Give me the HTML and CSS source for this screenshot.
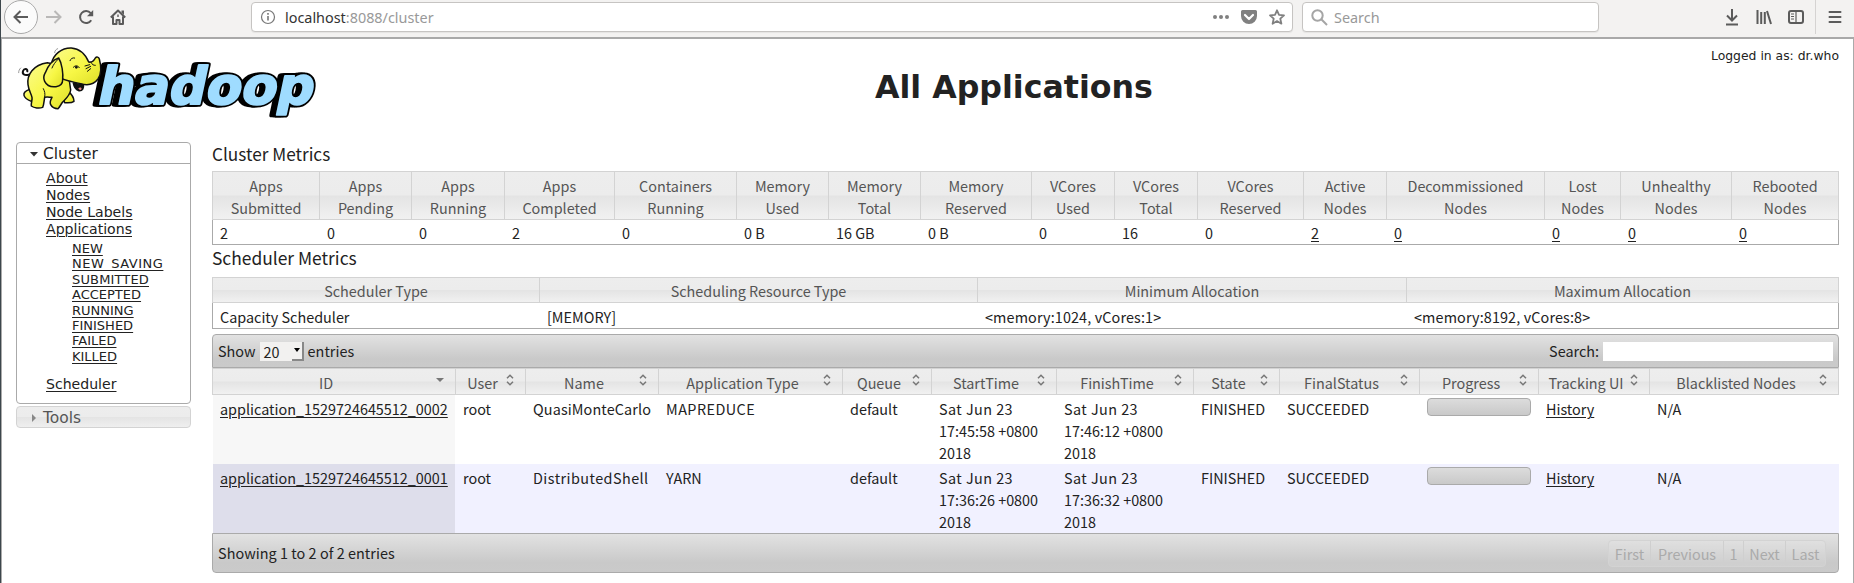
FILE: index.html
```html
<!DOCTYPE html>
<html lang="en">
<head>
<meta charset="utf-8">
<title>All Applications</title>
<link rel="stylesheet" href="styles.css">
</head>
<body>
<svg width="0" height="0" class="defs">
  <symbol id="sort" viewBox="0 0 8 12"><path d="M1 4.200 4 1.200 7 4.200M1 7.800 4 10.800 7 7.800" fill="none" stroke="#777" stroke-width="1.500"/></symbol>
</svg>
<header class="toolbar">
  <div class="nav">
    <span class="back"><svg width="16" height="16" viewBox="0 0 16 16"><path d="M15 8H2M7.500 2 1.500 8l6 6" class="ln"/></svg></span>
    <svg class="fwd" width="16" height="16" viewBox="0 0 16 16"><path d="M0 8h14M8.500 2l6 6-6 6" class="ln pale"/></svg>
    <svg class="reload" width="16" height="16" viewBox="0 0 16 16"><path d="M13.200 11.200A6 6 0 1 1 12.700 4.200" class="ln"/><path d="M15.200 1v6.200H9z" fill="#5b5b5b"/></svg>
    <svg class="home" width="16" height="16" viewBox="0 0 16 16"><path d="M.8 8.500 8 1.500l7.200 7M3 7.500V15h3.500v-4h3v4H13V7.500" class="ln" stroke-linejoin="round"/><path d="M11.500 1.500H14V6l-2.500-2.500zM7.300 5.500h1.400V8H7.300z" fill="#5b5b5b"/></svg>
  </div>
  <div class="url">
    <svg width="16" height="16" viewBox="0 0 16 16"><circle cx="8" cy="8" r="6.500" fill="none" stroke="#777" stroke-width="1.200"/><path d="M8 7v4.500M8 4v1.700" stroke="#777" stroke-width="1.600"/></svg>
    <span class="address">localhost<span>:8088/cluster</span></span>
    <svg width="16" height="16" viewBox="0 0 16 16" fill="#808080"><circle cx="2" cy="8" r="2"/><circle cx="8" cy="8" r="2"/><circle cx="14" cy="8" r="2"/></svg>
    <svg width="16" height="16" viewBox="0 0 16 16"><path d="M1.500 1h13a1.500 1.500 0 0 1 1.500 1.500V7a8 8 0 0 1-16 0V2.500A1.500 1.500 0 0 1 1.500 1z" fill="#808080"/><path d="M4 6l4 4 4-4" fill="none" stroke="#fff" stroke-width="2.200" stroke-linecap="round" stroke-linejoin="round"/></svg>
    <svg width="16" height="16" viewBox="0 0 16 16"><path d="M8 1.300 10 5.800l5 .5-3.700 3.400 1.100 5L8 12.100l-4.400 2.600 1.100-5L1 6.300l5-.5z" fill="none" stroke="#808080" stroke-width="1.800" stroke-linejoin="round"/></svg>
  </div>
  <div class="find">
    <svg width="17" height="17" viewBox="0 0 17 17"><circle cx="6.500" cy="6.500" r="5.200" class="mag"/><path d="M10.300 10.300 16 16" class="mag"/></svg>
    <span>Search</span>
  </div>
  <div class="tools">
    <svg width="16" height="18" viewBox="0 0 16 18"><path d="M8 1v11M3 7.500l5 5 5-5M2 16.500h12" class="ln"/></svg>
    <svg width="16" height="18" viewBox="0 0 16 18"><path d="M1.500 2v14M5.200 4v12M8.800 4v12M11 3l4 13" class="ln"/></svg>
    <svg width="16" height="18" viewBox="0 0 16 18"><rect x="1" y="3" width="14" height="12" rx="2" class="ln"/><path d="M8 3v12M3 6h3M3 8.500h3M3 11h3" stroke="#5b5b5b" stroke-width="1.200"/></svg>
    <i class="sep"></i>
    <svg width="14" height="18" viewBox="0 0 14 18"><path d="M1.500 4h11M1.500 9h11M1.500 14h11" class="ln" stroke-linecap="round"/></svg>
  </div>
</header>
<div class="page">
  <div class="banner">
    <svg class="logo" width="320" height="85" viewBox="0 0 960 255">
      <defs>
        <linearGradient id="skin" x1="0" y1="0" x2="1" y2="1"><stop offset="0" stop-color="#fbfb8c"/><stop offset=".55" stop-color="#f7f745"/><stop offset="1" stop-color="#dede28"/></linearGradient>
        <text id="word" class="word" x="0" y="0" textLength="648" lengthAdjust="spacingAndGlyphs">hadoop</text>
      </defs>
      <g transform="translate(257 191) skewX(-12)" stroke-linejoin="round">
        <use href="#word" x="-14" fill="#000" stroke="#000" stroke-width="16"/>
        <use href="#word" x="-7" fill="#000" stroke="#000" stroke-width="16"/>
        <use href="#word" fill="#000" stroke="#000" stroke-width="17"/>
        <use href="#word" fill="#9fdcff" stroke="#9fdcff" stroke-width="6"/>
      </g>
      <g stroke="#111" stroke-width="4.500" stroke-linejoin="round" stroke-linecap="round" fill="url(#skin)">
        <path d="M56 104c-12 4-20-2-17-11 3-8 14-8 13 1" fill="none" stroke-width="6"/>
        <path d="M60 148C48 152 40 158 42 166c2 8 12 14 22 18l10-16z"/>
        <path d="M172 152c10 8 20 20 20 32-8 6-18 4-28 4l-8-22z"/>
        <path d="M112 68C70 74 50 104 54 134c2 18 10 28 12 38 2 10-4 18-2 26 8 6 24 8 34 4 4-8 4-20 6-30 8-2 14 0 22 0-4 8-8 14-4 22 4 8 14 12 22 12 6-6 8-12 14-20 12-12 22-20 24-36l-10-70z"/>
        <path d="M124 72c6-30 32-49 60-48 24 2 42 18 52 42 10 2 16-4 20-12 4-5 10-3 12 3 5 18 8 42-4 60-12 16-32 20-52 14-24-6-50-8-68-22z"/>
        <path d="M190 129c2 11 6 19 16 23 12 2 16-8 14-18-10 0-18-2-30-5z" fill="#111"/>
        <path d="M205 145c4-4 9-3 10 1-2 5-7 5-10-1z" fill="#e88" stroke="none"/>
        <path d="M146 54C126 60 114 78 106 98c-6 10-6 18-2 26 6 12 18 18 34 16 14-2 20-8 20-20 2-20-2-50-12-66z"/>
        <path d="M144 58c-8 8-14 16-18 26M180 62c2-6 8-10 14-8M190 82c6-7 13-6 18 1M225 78l14-4M228 86l14-7M232 94l10-8M244 68c2 6 6 8 12 8M104 172c2-12 0-18-4-26" fill="none" stroke-width="3"/>
        <circle cx="199" cy="82" r="4" fill="#111" stroke="none"/>
        <path d="M134 38c0-6 4-10 9-12M26 98c0-6 2-10 6-14" fill="none" stroke="#666" stroke-width="2"/>
      </g>
    </svg>
    <h1>All Applications</h1>
    <div class="login">Logged in as: dr.who</div>
  </div>
  <div class="body">
    <nav class="side">
      <div class="panel">
        <h3><svg width="8" height="5" viewBox="0 0 8 5"><path d="M0 0h8L4 4.500z" fill="#333"/></svg>Cluster</h3>
        <ul>
          <li><a>About</a></li><li><a>Nodes</a></li><li><a>Node Labels</a></li>
          <li><a>Applications</a>
            <ul><li><a>NEW</a></li><li><a class="saving">NEW_SAVING</a></li><li><a class="submitted">SUBMITTED</a></li><li><a>ACCEPTED</a></li><li><a>RUNNING</a></li><li><a>FINISHED</a></li><li><a>FAILED</a></li><li><a>KILLED</a></li></ul>
          </li>
          <li><a>Scheduler</a></li>
        </ul>
      </div>
      <h3 class="closed"><svg width="8" height="8" viewBox="0 0 8 8"><path d="M2 0v8l4-4z" fill="#888"/></svg>Tools</h3>
    </nav>
    <main>
      <h2 class="first">Cluster Metrics</h2>
      <table class="info">
        <colgroup><col style="width:107px"><col style="width:92px"><col style="width:93px"><col style="width:110px"><col style="width:122px"><col style="width:92px"><col style="width:92px"><col style="width:111px"><col style="width:83px"><col style="width:83px"><col style="width:106px"><col style="width:83px"><col style="width:158px"><col style="width:76px"><col style="width:111px"><col style="width:108px"></colgroup>
        <thead><tr><th>Apps<br>Submitted</th><th>Apps<br>Pending</th><th>Apps<br>Running</th><th>Apps<br>Completed</th><th>Containers<br>Running</th><th>Memory<br>Used</th><th>Memory<br>Total</th><th>Memory<br>Reserved</th><th>VCores<br>Used</th><th>VCores<br>Total</th><th>VCores<br>Reserved</th><th>Active<br>Nodes</th><th>Decommissioned<br>Nodes</th><th>Lost<br>Nodes</th><th>Unhealthy<br>Nodes</th><th>Rebooted<br>Nodes</th></tr></thead>
        <tbody><tr><td>2</td><td>0</td><td>0</td><td>2</td><td>0</td><td>0 B</td><td>16 GB</td><td>0 B</td><td>0</td><td>16</td><td>0</td><td><a>2</a></td><td><a>0</a></td><td><a>0</a></td><td><a>0</a></td><td><a>0</a></td></tr></tbody>
      </table>
      <h2 class="second">Scheduler Metrics</h2>
      <table class="info sched">
        <colgroup><col style="width:327px"><col style="width:438px"><col style="width:429px"><col style="width:433px"></colgroup>
        <thead><tr><th>Scheduler Type</th><th>Scheduling Resource Type</th><th>Minimum Allocation</th><th>Maximum Allocation</th></tr></thead>
        <tbody><tr><td>Capacity Scheduler</td><td>[MEMORY]</td><td><span class="loose">&lt;memory:1024, vCores:1&gt;</span></td><td><span class="loose">&lt;memory:8192, vCores:8&gt;</span></td></tr></tbody>
      </table>
      <div class="bar top">
        <span>Show</span>
        <span class="select"><span>20</span><i><svg width="6" height="4" viewBox="0 0 6 4"><path d="M0 0h6L3 4z"/></svg></i></span>
        <span class="grow">entries</span>
        <span>Search:</span><input class="filter" type="text" aria-label="Search">
      </div>
      <table class="apps">
        <colgroup><col style="width:243px"><col style="width:70px"><col style="width:133px"><col style="width:184px"><col style="width:89px"><col style="width:125px"><col style="width:137px"><col style="width:86px"><col style="width:140px"><col style="width:119px"><col style="width:111px"><col style="width:190px"></colgroup>
        <thead><tr>
          <th><div>ID<svg width="8" height="12" viewBox="0 0 8 12"><path d="M0 4h8L4 8z" fill="#777"/></svg></div></th>
          <th><div>User<svg width="8" height="12"><use href="#sort"/></svg></div></th>
          <th><div>Name<svg width="8" height="12"><use href="#sort"/></svg></div></th>
          <th><div>Application Type<svg width="8" height="12"><use href="#sort"/></svg></div></th>
          <th><div>Queue<svg width="8" height="12"><use href="#sort"/></svg></div></th>
          <th><div>StartTime<svg width="8" height="12"><use href="#sort"/></svg></div></th>
          <th><div>FinishTime<svg width="8" height="12"><use href="#sort"/></svg></div></th>
          <th><div>State<svg width="8" height="12"><use href="#sort"/></svg></div></th>
          <th><div>FinalStatus<svg width="8" height="12"><use href="#sort"/></svg></div></th>
          <th><div>Progress<svg width="8" height="12"><use href="#sort"/></svg></div></th>
          <th><div>Tracking UI<svg width="8" height="12"><use href="#sort"/></svg></div></th>
          <th><div>Blacklisted Nodes<svg width="8" height="12"><use href="#sort"/></svg></div></th>
        </tr></thead>
        <tbody>
          <tr><td><a>application_1529724645512_0002</a></td><td>root</td><td><span class="loose">QuasiMonteCarlo</span></td><td><span class="wide">MAPREDUCE</span></td><td>default</td><td><span class="wide">Sat Jun 23</span><br>17:45:58 +0800<br>2018</td><td><span class="wide">Sat Jun 23</span><br>17:46:12 +0800<br>2018</td><td>FINISHED</td><td>SUCCEEDED</td><td><div class="progress"></div></td><td><a>History</a></td><td>N/A</td></tr>
          <tr class="even"><td><a>application_1529724645512_0001</a></td><td>root</td><td><span class="wide">DistributedShell</span></td><td>YARN</td><td>default</td><td><span class="wide">Sat Jun 23</span><br>17:36:26 +0800<br>2018</td><td><span class="wide">Sat Jun 23</span><br>17:36:32 +0800<br>2018</td><td>FINISHED</td><td>SUCCEEDED</td><td><div class="progress"></div></td><td><a>History</a></td><td>N/A</td></tr>
        </tbody>
      </table>
      <div class="bar bottom">
        <span class="grow">Showing 1 to 2 of 2 entries</span>
        <div class="pager"><span class="p1">First</span><span class="p2">Previous</span><span class="p3">1</span><span class="p4">Next</span><span class="p5">Last</span></div>
      </div>
    </main>
  </div>
</div>
</body>
</html>
```

FILE: styles.css
```css
* { box-sizing: border-box; }
body { margin: 0; width: 1854px; height: 583px; overflow: hidden; background: #fff; color: #222; border-left: 1px solid #3d474c; font: 14.4px/22px "Noto Sans CJK SC", sans-serif; }
.defs { display: block; }
h1, h2, h3, ul { margin: 0; padding: 0; font-weight: normal; list-style: none; }
svg { flex: none; }
a { text-decoration: underline; text-underline-offset: 2px; text-decoration-thickness: 1px; }

.toolbar { display: flex; height: 37px; background: #f3f2f1; font: 14.4px/30px "Noto Sans", sans-serif; align-items: flex-start; }
.ln { fill: none; stroke: #5b5b5b; stroke-width: 2; }
.ln.pale { stroke: #b9b8b7; }
.mag { fill: none; stroke: #a5a5a5; stroke-width: 2; }
.nav { display: flex; align-items: center; height: 34px; width: 250px; padding-left: 3px; }
.back { display: flex; align-items: center; justify-content: center; width: 34px; height: 34px; border: 1px solid #aaa; border-radius: 50%; background: #fbfbfb; }
.fwd { margin-left: 8px; }
.reload { margin-left: 16px; }
.home { margin-left: 16px; }
.url, .find { display: flex; align-items: center; height: 30px; margin-top: 2px; background: #fff; border: 1px solid #c6c4c2; border-radius: 4px; box-shadow: 0 1px 1px rgba(0, 0, 0, .06); }
.url { width: 1042px; padding: 0 7px 0 8px; gap: 12px; }
.address { flex: 1; color: #333; margin-left: -3px; padding-top: 1px; }
.address span { color: #999; }
.find { width: 297px; margin-left: 9px; padding-left: 8px; gap: 6px; color: #999; }
.find span { padding-top: 1px; }
.tools { display: flex; align-items: center; height: 34px; margin-left: 125px; gap: 16px; }
.sep { flex: none; width: 1px; height: 34px; background: #d5d3d2; margin: 0 -4px 0 -5px; }

.page { height: 546px; border: 1px solid #aaa; border-top: 2px solid #a9a9a9; border-bottom: 0; padding-left: 14px; }
.banner { display: flex; height: 103px; }
.logo { margin: 1px 0 0 -6px; overflow: visible; }
.word { font: bold 154px "DejaVu Sans", sans-serif; }
h1 { flex: 1; margin-left: 545px; font: bold 31.650px/36px "DejaVu Sans", sans-serif; padding-top: 30px; }
.login { font: 12.390px/16px "DejaVu Sans", sans-serif; padding: 9px 14px 0 0; }
.body { display: flex; gap: 21px; }

.side { width: 175px; font: 14.080px/17px "DejaVu Sans", sans-serif; }
.side h3 { display: flex; align-items: center; height: 21px; font-size: 15.488px; padding: 2px 0 0 13px; gap: 5px; }
.panel { height: 262px; border: 1px solid #aaa; border-radius: 4px; }
.panel h3 { border-bottom: 1px solid #aaa; }
.panel > ul { padding: 6px 0 0 29px; }
.panel ul ul { padding: 3px 0 12px 26px; font-size: 13px; line-height: 15.400px; }
.saving { letter-spacing: .5px; }
.submitted { letter-spacing: .15px; }
.side h3.closed { height: 22px; margin-top: 2px; border: 1px solid #d3d3d3; border-radius: 4px; color: #555; background: linear-gradient(#ededed, #ececec 48%, #e4e4e4 52%, #efefef); }

main { width: 1627px; }
h2 { font-size: 17.4px; line-height: 26px; height: 29px; }
h2.first { line-height: 23px; font-size: 17.2px; }
h2.second { height: 32px; }
table { table-layout: fixed; width: 1627px; border-collapse: separate; border-spacing: 0; }
th { font-weight: normal; color: #555; padding: 3px 0 0; border: solid #d3d3d3; border-width: 1px 0 1px 1px; background: linear-gradient(#ededed, #ececec 48%, #e4e4e4 52%, #f1f1f1); vertical-align: top; }
th:last-child { border-right-width: 1px; }
td { padding: 2px 0 0 8px; vertical-align: top; white-space: nowrap; }
.info th { height: 49px; }
.info td { height: 25px; border-bottom: 1px solid #aaa; }
.info td:first-child { border-left: 1px solid #aaa; padding-left: 7px; }
.info td:last-child { border-right: 1px solid #aaa; }
.sched th { height: 26px; padding-top: 2px; }
.sched td { height: 26px; padding-top: 3px; }

.bar { display: flex; align-items: center; border: 1px solid #aaa; background: linear-gradient(#e2e2e2, #c9c9c9 75%, #cacaca); padding: 0 5px; }
.top { margin-top: 5px; height: 34px; border-radius: 4px 4px 0 0; }
.bottom { height: 40px; border-radius: 0 0 4px 4px; }
.grow { flex: 1; letter-spacing: .05px; }
.select { display: flex; width: 44px; height: 19px; margin: 0 4px 0 4px; background: #f2f1f0; line-height: 19px; padding-left: 4px; justify-content: space-between; }
.select i { display: flex; align-items: center; justify-content: center; width: 12px; border: solid #888; border-width: 0 2px 2px 0; }
.filter { width: 230px; height: 19px; margin-left: 4px; border: 0; padding: 0; background: #fff; }
.apps th { height: 27px; }
.apps th div { display: grid; grid-template-columns: 1fr 8px; column-gap: 5px; padding: 0 11px 0 8px; white-space: nowrap; }
.apps th svg { margin-top: 2px; }
.apps td { height: 69px; padding-top: 3px; }
.apps td:first-child { background: linear-gradient(#f7f7f7, #f7f7f7) 1px 0 no-repeat; }
.even td { background: #f1f1ff; }
.apps .even td:first-child { background: linear-gradient(#dedeeb, #dedeeb) 1px 0 no-repeat; }
.wide { letter-spacing: .45px; }
.loose { letter-spacing: .12px; }
.progress { width: 104px; height: 18px; border: 1px solid #aaa; border-radius: 4px; background: linear-gradient(#dcdcdc, #c9c9c9); }
.pager { display: flex; height: 27px; width: 218px; margin-right: 7px; border: 1px solid #d3d3d3; border-radius: 4px; color: #aaa; line-height: 25px; text-align: center; background: rgba(255, 255, 255, .12); }
.pager span + span { border-left: 1px solid #cfcfcf; }
.p1 { width: 41px; } .p2 { width: 73px; } .p3 { width: 20px; } .p4 { width: 42px; } .p5 { flex: 1; }
```
